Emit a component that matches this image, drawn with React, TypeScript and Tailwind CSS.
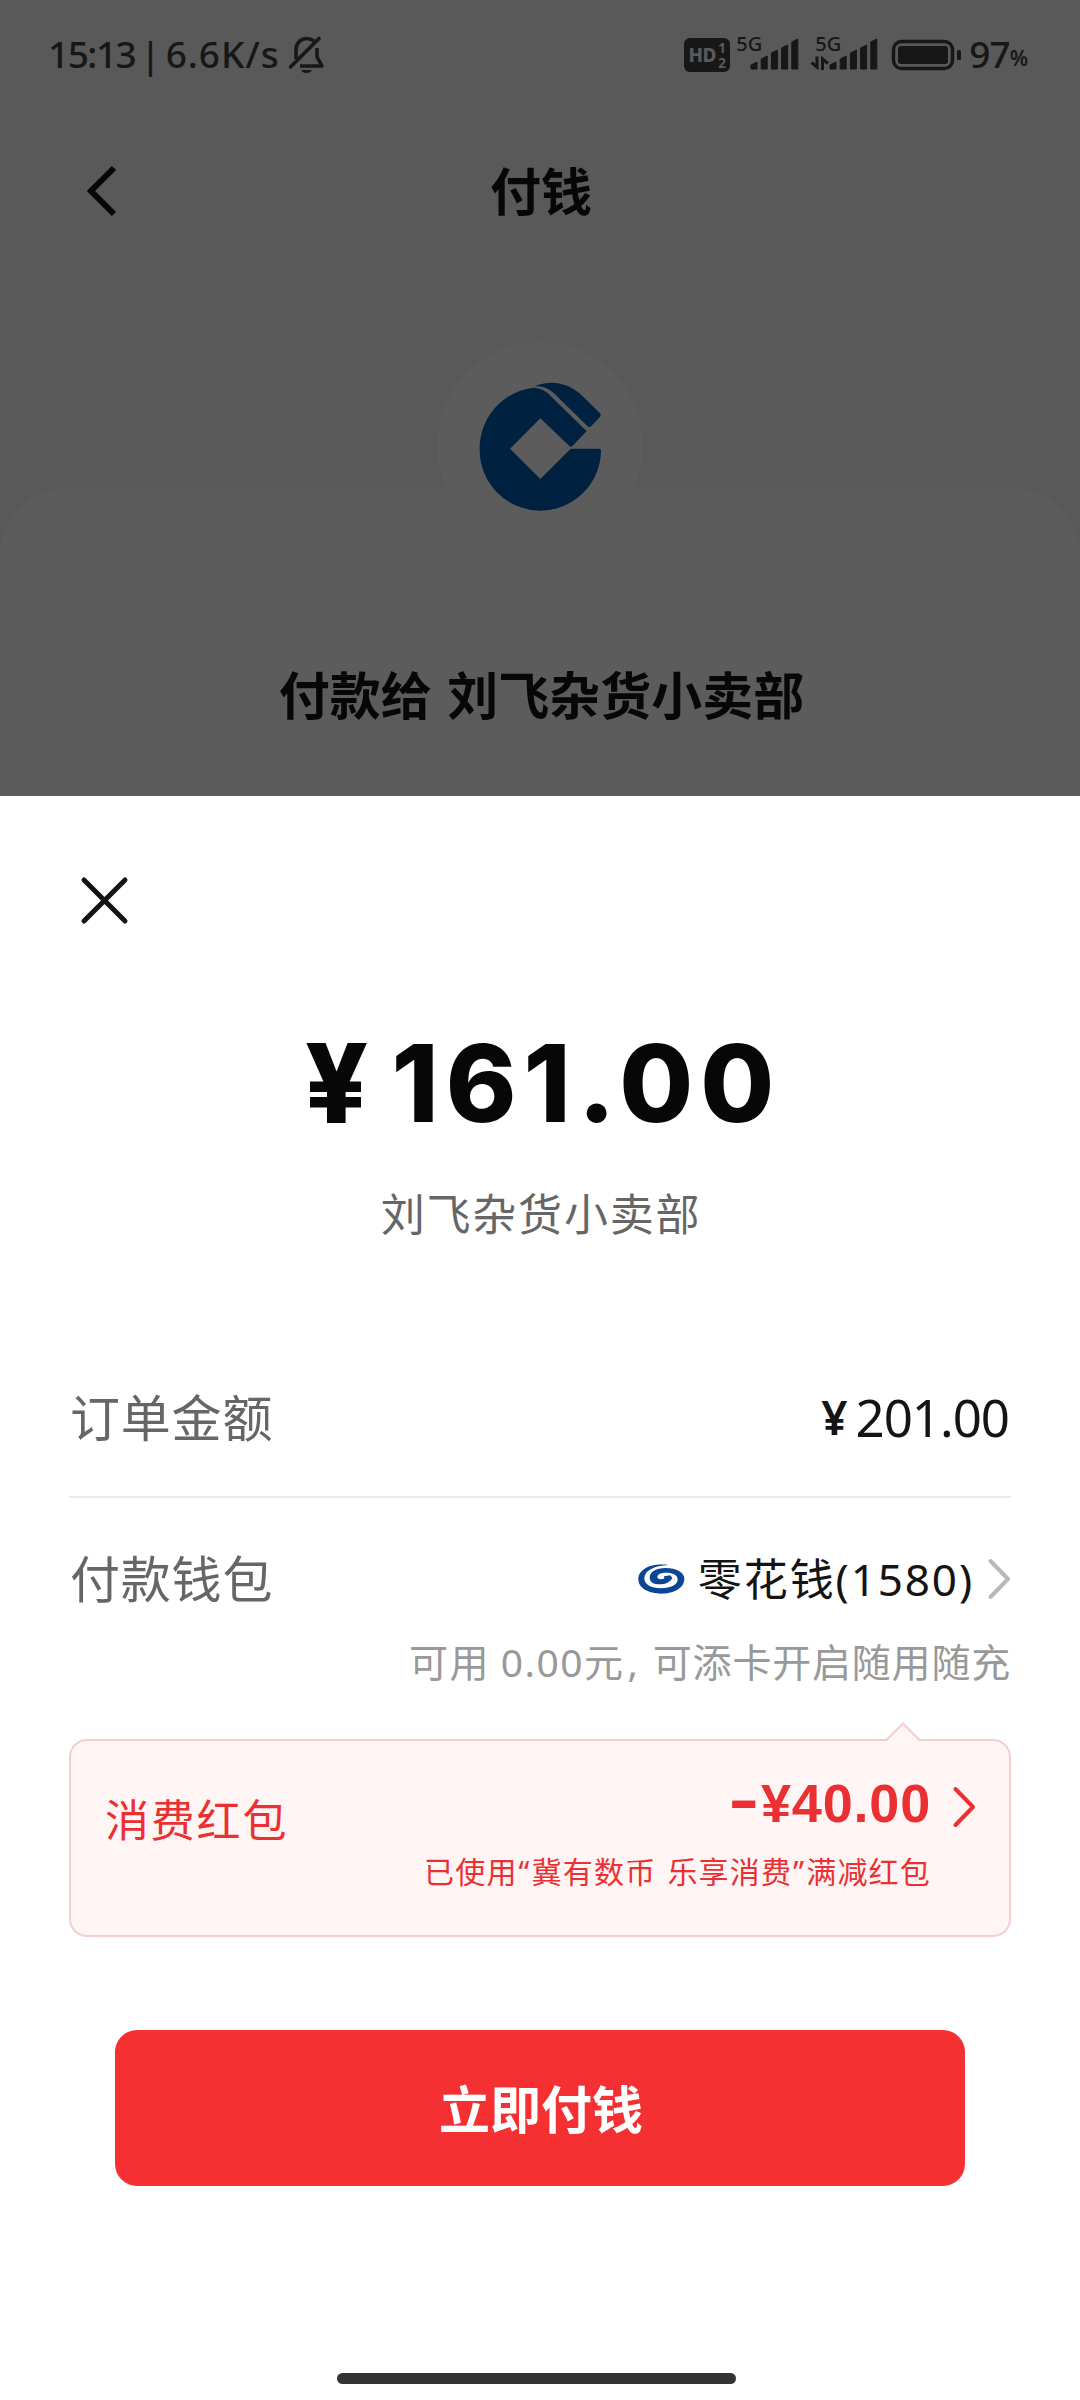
import type { ReactNode } from "react";

const wallet = {
  merchant: "刘飞杂货小卖部",
  total: "161.00",
  order: "201.00",
  name: "零花钱(1580)",
};

const bars = [7, 13, 19, 24, 30];

function BellOff() {
  return (
    <svg className="ml-[9px] h-[38px] w-[36px]" viewBox="0 0 36 38" fill="none">
      <path
        d="M7 23V14C7 7 12 2.5 17.500 2.500C20.500 2.500 23 3.500 25 5M28 12V21L33 30H11"
        stroke="#171717"
        strokeWidth="3.6"
        strokeLinejoin="round"
      />
      <path d="M1.500 31L30 2.500" stroke="#171717" strokeWidth="3.6" strokeLinecap="round" />
      <path d="M12 34H23C21.500 38 13.500 38 12 34Z" fill="#171717" />
    </svg>
  );
}

function Signal({ data = false }: { data?: boolean }) {
  return (
    <svg className="h-[38px] w-[66px] overflow-visible" viewBox="0 0 66 38">
      {data && (
        <path d="M4 20.500V31L-1.500 26.500M9.500 34V23L15 27.500" stroke="#171717" strokeWidth="3" fill="none" />
      )}
      {bars.map((h, i) => (
        <path
          key={h}
          d={`M${17 + i * 10.2} ${33}v${-h + 3}l6 -3v${h}z`}
          fill="#171717"
          stroke="#171717"
          strokeWidth="1"
          strokeLinejoin="round"
        />
      ))}
    </svg>
  );
}

function Network({ data }: { data?: boolean }) {
  return (
    <div className="relative h-[38px] w-[66px]">
      <Signal data={data} />
      <span className="absolute left-[2px] top-[-1px] text-[20px] font-medium leading-[18px]">5G</span>
    </div>
  );
}

function StatusBar() {
  return (
    <div className="flex h-[110px] items-center pl-[48px] pr-[52px] text-[#171717]">
      <div className="mb-[3px] flex text-[37px] font-medium leading-none">
        <span className="tracking-[-1.5px]">15:13</span>
        <span className="mx-[5px]">|</span>
        <span className="tracking-[1px]">6.6K/s</span>
      </div>
      <BellOff />
      <div className="flex-1" />
      <div className="flex h-[34px] w-[46px] items-center justify-center gap-[2px] rounded-[6px] bg-[#171717] text-[#595959]">
        <span className="text-[19px] font-extrabold leading-none tracking-[-0.5px]">HD</span>
        <span className="flex flex-col text-[14px] font-bold leading-[15px]">
          <span>1</span>
          <span>2</span>
        </span>
      </div>
      <div className="ml-[4px] flex gap-[13px]">
        <Network />
        <Network data />
      </div>
      <svg className="ml-[11px] h-[32px] w-[72px]" viewBox="0 0 72 32">
        <rect x="3.500" y="2.500" width="59" height="27" rx="8" fill="none" stroke="#171717" strokeWidth="3.400" />
        <rect x="8" y="7" width="50" height="18" rx="3" fill="#171717" />
        <rect x="67" y="11" width="4" height="10" rx="1.500" fill="#171717" />
      </svg>
      <span className="mb-[3px] ml-[7px] text-[37px] font-medium leading-none tracking-[-1px]">97</span>
      <span className="mt-[6px] text-[21px] font-semibold leading-none">%</span>
    </div>
  );
}

function BankLogo() {
  return (
    <div className="z-10 flex h-[206px] w-[206px] items-center justify-center rounded-full bg-[#5c5c5c]">
      <svg className="mt-[3px] h-[129px] w-[123px]" viewBox="237 186 369 387">
        <path
          fill="#002140"
          d="M402 203C310 213 239 290 239 388A182 182 0 0 0 603 392Q603 386 597 386H512L421 477L330 386L421 295L509 379Q513 382 517 378L560 334L452 228Q430 204 402 203Z"
        />
        <path
          fill="#002140"
          d="M404 199Q428 188 455 188C490 188 520 203 541 222L600 280Q605 286 600 291L573 319Q568 324 562 318L462 220Q437 196 404 199Z"
        />
      </svg>
    </div>
  );
}

function YuanLogo() {
  return (
    <svg className="mr-[13px] h-[30px] w-[47px]" viewBox="0 0 141 90" fill="none">
      <path
        fill="#0b4596"
        d="M92 3C42 -4 1 14 1 46C1 72 31 89 70 89C109 89 139 71 139 45C139 25 115 12 83 12C54 12 35 24 35 41C35 54 47 61 65 61C83 61 96 54 103 42L97 34L78 37L79 43C73 48 58 46 58 39C58 30 70 26 84 26C106 26 119 34 119 46C119 62 99 73 70 73C38 73 19 61 19 43C19 21 46 5 92 3Z"
      />
    </svg>
  );
}

function Chevron({ color }: { color: string }) {
  return (
    <svg className="h-[42px] w-[24px] shrink-0" viewBox="0 0 24 42" fill="none">
      <path d="M3.500 3L21 21L3.500 39" stroke={color} strokeWidth="4" strokeLinecap="round" strokeLinejoin="round" />
    </svg>
  );
}

function Row({ label, children }: { label: string; children: ReactNode }) {
  return (
    <div className="flex items-center justify-between">
      <span className="pl-[1px] text-[50px] leading-none tracking-[0.8px] text-[#666]">{label}</span>
      {children}
    </div>
  );
}

export default function App() {
  return (
    <main className="flex h-[2400px] w-[1080px] flex-col overflow-hidden bg-white font-['Noto_Sans','Noto_Sans_CJK_SC',sans-serif]">
      <section className="flex h-[796px] shrink-0 flex-col bg-[#595959] text-[#070707]">
        <StatusBar />
        <header className="grid h-[162px] grid-cols-[1fr_auto_1fr] items-center pl-[84px] pr-[82px]">
          <svg className="h-[54px] w-[34px]" viewBox="0 0 34 54" fill="none">
            <path d="M30 4L7 27L30 50" stroke="#070707" strokeWidth="6" />
          </svg>
          <h1 className="text-[51px] font-bold leading-none">付钱</h1>
        </header>
        <div className="mt-[70px] flex flex-1 flex-col items-center">
          <BankLogo />
          <div className="-mt-[61px] flex w-full flex-1 justify-center rounded-t-[70px] bg-[#5c5c5c] pl-[3px] pt-[183px]">
            <h2 className="text-[51px] font-bold leading-none [word-spacing:2px]">付款给 {wallet.merchant}</h2>
          </div>
        </div>
      </section>

      <section className="flex flex-1 flex-col px-[69px] text-[#141414]">
        <button className="mt-[80px] ml-[11px] h-[49px] w-[49px]">
          <svg viewBox="0 0 49 49" fill="none">
            <path d="M4 4L45 45M45 4L4 45" stroke="#141414" strokeWidth="5" strokeLinecap="round" />
          </svg>
        </button>

        <div className="mt-[96px] flex h-[124px] items-center justify-center pl-[6px] font-['Inter'] text-[107px] font-extrabold leading-none tracking-[7px] text-[#070707]">
          <span className="mr-[16px] text-[110px]">¥</span>
          {wallet.total}
        </div>
        <p className="mt-[47px] pl-[2px] text-center text-[44px] leading-none tracking-[1.8px] text-[#666]">
          {wallet.merchant}
        </p>

        <div className="mt-[104px] flex h-[158px] flex-col justify-center border-b-2 border-[#ebebeb]">
          <Row label="订单金额">
            <span className="flex items-center pb-[2px] pr-[2px] text-[51px] leading-none tracking-[-1px]">
              <span className="mr-[9px] text-[46px] font-semibold">¥</span>
              {wallet.order}
            </span>
          </Row>
        </div>

        <div className="mt-[56px]">
          <Row label="付款钱包">
            <span className="flex items-center text-[44px] leading-none tracking-[1.9px]">
              <YuanLogo />
              {wallet.name}
              <span className="ml-[13px] flex">
                <Chevron color="#b8b8b8" />
              </span>
            </span>
          </Row>
          <p className="mt-[38px] text-right text-[39px] leading-none tracking-[0.8px] text-[#999]">
            <span className="tracking-[1.5px] [word-spacing:-1px]">可用 0.00元</span>
            <span className="px-[3px]">, </span>
            可添卡开启随用随充
          </p>
        </div>

        <div className="relative mt-[58px] flex h-[198px] shrink-0 rounded-[18px] border-2 border-[#f3cfcf] bg-[#fef5f4] pl-[34px] pr-[33px] text-[#ea3033]">
          <svg className="absolute right-[88px] top-[-20px] h-[22px] w-[36px]" viewBox="0 0 36 22">
            <path d="M2 20L18 2.500L34 20V22H2Z" fill="#fef5f4" />
            <path d="M1 19.500L18 2.500L35 19.500" fill="none" stroke="#f3cfcf" strokeWidth="2" />
          </svg>
          <span className="mt-[57px] text-[44px] leading-none tracking-[1.8px]">消费红包</span>
          <div className="ml-auto flex flex-col items-end">
            <b className="mt-[35px] flex font-['Liberation_Sans'] text-[54px] leading-none tracking-[0.8px]">
              <span className="mr-[3px] mt-[-5px] font-['Noto_Sans'] font-black">–</span>¥40.00
            </b>
            <span className="mt-[27px] text-[30px] leading-none tracking-[1.2px] [word-spacing:2px]">
              已使用<span className="px-[1px]">“</span>冀有数币 乐享消费<span className="px-[1px]">”</span>满减红包
            </span>
          </div>
          <span className="ml-[21px] mt-[45px]">
            <Chevron color="#ea3033" />
          </span>
        </div>

        <button className="mx-[46px] mt-[93px] flex h-[156px] shrink-0 items-center justify-center rounded-[22px] bg-[#f43032] pl-[2px] pt-[2px] text-[51px] font-bold leading-none text-white">
          立即付钱
        </button>

        <div className="mb-[16px] ml-[268px] mt-auto h-[11px] w-[399px] rounded-full bg-[#333]" />
      </section>
    </main>
  );
}
